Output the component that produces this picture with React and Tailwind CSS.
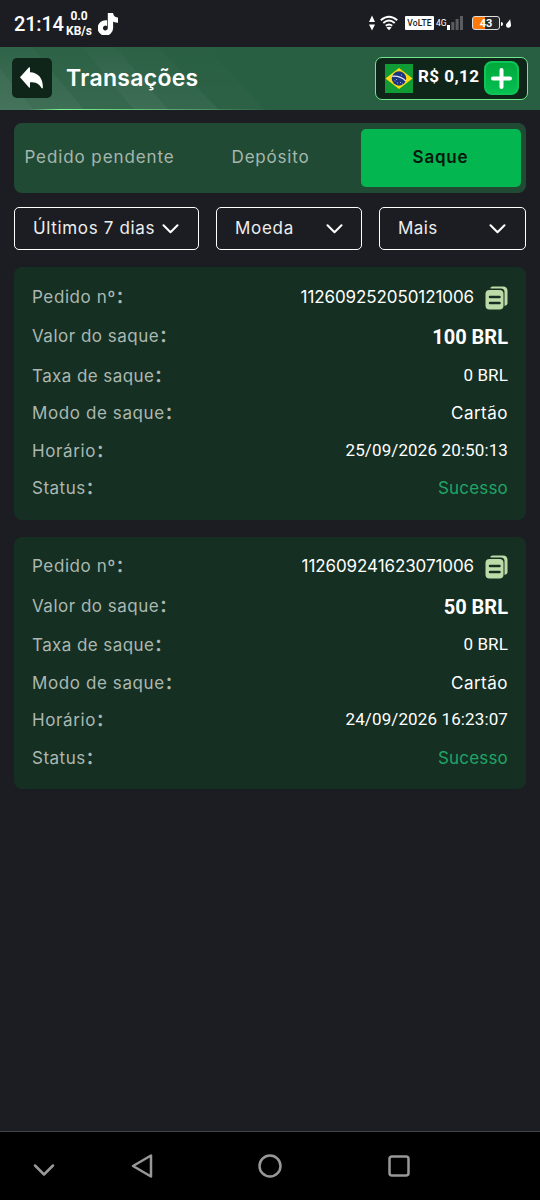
import { FaTiktok } from 'react-icons/fa6';

const orders = [
    { id: '112609252050121006', amount: '100 BRL', fee: '0 BRL', mode: 'Cartão', time: '25/09/2026 20:50:13', status: 'Sucesso' },
    { id: '112609241623071006', amount: '50 BRL', fee: '0 BRL', mode: 'Cartão', time: '24/09/2026 16:23:07', status: 'Sucesso' },
];

const filters = [
    { label: 'Últimos 7 dias', box: 'w-[185px] pr-[19px]', text: 'tracking-[0.65px]' },
    { label: 'Moeda', box: 'w-[146px] pr-[18px]', text: 'tracking-[0.7px]' },
    { label: 'Mais', box: 'w-[147px] pr-[19px]', text: 'tracking-[0.4px]' },
];

const StatusBar = () => (
    <div className="h-[47px] flex items-center justify-between pl-[14px] pr-[29px] font-['Roboto',sans-serif] text-white">
        <div className="flex items-center">
            <span className="text-[20px] leading-6 w-[52px] whitespace-nowrap font-medium tracking-[-0.2px]">21:14</span>
            <div className="flex flex-col items-center w-[26px] text-[12px] leading-[15px] font-bold whitespace-nowrap">
                <span>0.0</span>
                <span>KB/s</span>
            </div>
            <FaTiktok className="ml-[6px] w-[20px] h-[22px] stroke-white stroke-[36px]" />
        </div>
        <div className="flex items-center">
            <svg className="w-[8px] h-[16px] -mt-[2px]" viewBox="0 0 8 16" fill="white">
                <path d="M4 0.5 7 7H1zM4 15.5 1 9.5h6z" />
            </svg>
            <svg className="ml-[4px] w-[18px] h-[16px] -mt-[2px]" viewBox="0 0 18 16" fill="none" stroke="white" strokeWidth="1.9">
                <path d="M0.8 5.2Q9-1.8 17.2 5.2M3.3 8Q9 3.2 14.7 8M5.8 10.8Q9 8.2 12.2 10.8" />
                <path d="M9 15.2 6.4 12.6Q9 10.8 11.6 12.6z" fill="white" stroke="none" />
            </svg>
            <span className="ml-[7px] w-[29px] h-[14px] rounded-[1px] bg-white text-[#1c1d22] text-[8.5px] leading-[14px] font-medium text-center tracking-[0.2px] -mt-px">VoLTE</span>
            <span className="ml-[2px] w-[11px] text-[8.5px] leading-[14px] -mt-px">4G</span>
            <svg className="w-[16px] h-[14px] -mt-px" viewBox="0 0 16 14">
                <rect x="0" y="9" width="3" height="5" fill="#fff" />
                <rect x="4.3" y="6" width="3" height="8" fill="#5b5c60" />
                <rect x="8.6" y="3" width="3" height="11" fill="#5b5c60" />
                <rect x="13" y="0" width="3" height="14" fill="#5b5c60" />
            </svg>
            <div className="ml-[9px] w-[28px] h-[14px] -mt-px rounded-[3px] border border-[#dedede] bg-[linear-gradient(90deg,#ff7a05_0_12px,#26272b_12px)] text-[11px] leading-[13px] font-bold text-center">43</div>
            <span className="ml-px w-[2px] h-[4px] bg-white rounded-r-sm"></span>
            <svg className="ml-[3px] w-[5px] h-[9px]" viewBox="0 0 5 9" fill="white">
                <path d="M4.2 0C4 2 5 3.5 5 6a2.4 2.4 0 0 1-5 .5C0 4.5 2 4 4.2 0z" />
            </svg>
        </div>
    </div>
);

const Flag = () => (
    <svg className="w-[28px] h-[29px]" viewBox="0 0 28 29">
        <rect width="28" height="29" fill="#119b35" />
        <path d="M14 4 27.5 14.5 14 25 .5 14.5z" fill="#fddb13" />
        <circle cx="14" cy="14.5" r="7.2" fill="#1c3581" />
        <path d="M7.2 12.3Q15 11.5 20.8 17" fill="none" stroke="#dfe6ee" strokeWidth="1.3" />
        <path d="M9.5 17h1M12 19h1M15 18.5h1M17 20h1M11 15.5h1M16 11h1" stroke="#9aaace" strokeWidth="1" />
    </svg>
);

const Header = () => (
    <header className="relative h-[63px] flex items-center justify-between pl-3 pr-3 bg-[#285e42]">
        <svg className="absolute inset-0 w-[270px] h-[63px]" viewBox="0 0 270 63">
            <defs>
                <linearGradient id="band" x1="0" y1="0" x2="0" y2="1">
                    <stop offset="0" stopColor="#fff" stopOpacity="0.04" />
                    <stop offset="1" stopColor="#fff" stopOpacity="0.12" />
                </linearGradient>
                <linearGradient id="edge">
                    <stop offset="0.1" stopColor="#7af58f" stopOpacity="0" />
                    <stop offset="0.22" stopColor="#7af58f" />
                    <stop offset="1" stopColor="#7af58f" stopOpacity="0" />
                </linearGradient>
            </defs>
            <path d="M0 0H32L84 63H0z" fill="url(#band)" opacity="0.9" />
            <path d="M0 22 34 63H0z" fill="#fff" fillOpacity="0.03" />
            <path d="M32 0H82L134 63H84z" fill="url(#band)" opacity="0.55" />
            <path d="M82 0H116L168 63H134z" fill="url(#band)" opacity="0.85" />
            <path d="M116 0H158L219 63H168z" fill="url(#band)" opacity="0.5" />
            <path d="M158 0H205L265 63H219z" fill="url(#band)" opacity="0.18" />
            <rect y="62" width="270" height="1" fill="url(#edge)" />
        </svg>
        <div className="relative flex items-center -mt-px">
            <button className="w-10 h-10 rounded-[5px] bg-[#10251a] flex items-center justify-center">
                <svg className="w-[23px] h-[22px] -ml-px" viewBox="0 0 23 22" fill="white">
                    <path d="M0 10.3 9 .3Q10 0 10 1V5.3C18 5.5 22.9 11 22.9 20.5Q22.5 22 21.5 21C19 16.5 16 15.3 10 15.3V19.8Q10 21.3 9 20.4z" />
                </svg>
            </button>
            <h1 className="ml-[14px] text-[23px] leading-7 font-semibold text-white tracking-[0.3px]">Transações</h1>
        </div>
        <div className="relative w-[153px] h-[43px] rounded-[7px] border border-[#72e68c] bg-[#10251a] flex items-center pl-[9px] font-['Roboto',sans-serif]">
            <Flag />
            <span className="ml-[5px] w-[66px] -mt-1 text-[17px] font-bold text-white whitespace-nowrap tracking-[0.45px]">R$ 0,12</span>
            <button className="w-[35px] h-[34px] rounded-[8px] border-2 border-[#0fc557] bg-linear-to-b from-[#00a83a] to-[#05c052] flex items-center justify-center -mt-px">
                <svg className="w-[21px] h-[21px] shrink-0" viewBox="0 0 21 21" stroke="white" strokeWidth="4" strokeLinecap="round">
                    <path d="M10.5 2v17M2 10.5h17" />
                </svg>
            </button>
        </div>
    </header>
);

const Tabs = () => (
    <div className="mt-[13px] mx-[14px] h-[70px] rounded-[8px] bg-[#214a35] flex items-center pr-[5.5px] text-[17px] text-[#a6b7ae]">
        <span className="w-[171px] text-center tracking-[0.9px]">Pedido pendente</span>
        <span className="w-[171px] text-center tracking-[0.8px]">Depósito</span>
        <span className="ml-auto w-[160px] h-[58px] rounded-[5px] bg-[#04b650] text-[#06180d] font-semibold leading-[56px] text-center tracking-[0.8px]">Saque</span>
    </div>
);

const Filters = () => (
    <div className="mt-[14px] mx-[14px] flex justify-between">
        {filters.map(f => (
            <button key={f.label} className={`${f.box} h-[43px] rounded-[5px] border border-white pl-[18px] flex items-center justify-between text-[17px] text-[#eeeeee]`}>
                <span className={f.text}>{f.label}</span>
                <svg className="w-[17px] h-[10px]" viewBox="0 0 17 10" fill="none" stroke="white" strokeWidth="2" strokeLinecap="round" strokeLinejoin="round">
                    <path d="M1.5 1.2 8.5 8.2 15.5 1.2" />
                </svg>
            </button>
        ))}
    </div>
);

const CopyIcon = () => (
    <svg className="w-[23px] h-[24px]" viewBox="0 0 23 24">
        <path d="M5.5 1.5Q6.3.5 8 .5H18Q22.5.5 22.5 5V17.5Q22.5 19 19.5 20V6Q19.5 2.5 16 2.5H5.5z" fill="#bcdba8" />
        <rect x="0.5" y="4" width="18" height="19.5" rx="4" fill="#bcdba8" />
        <path d="M5 11h9.5M5 17h9.5" stroke="#152f22" strokeWidth="2.5" strokeLinecap="round" />
    </svg>
);

const Row = ({ label, track, height = 'h-[37.5px]', children }) => (
    <div className={`${height} flex items-center justify-between`}>
        <span className={`${track} text-[17px] text-[#abb8b1] whitespace-nowrap`}>
            {label}
            <span className="font-bold tracking-normal">：</span>
        </span>
        {children}
    </div>
);

const OrderCard = ({ order }) => (
    <div className="mx-[14px] h-[252.5px] rounded-[8px] bg-[#152f22] px-[18px] pt-[11.5px] text-[17px] text-white">
        <Row label="Pedido nº" track="tracking-[0.6px]" height="h-[38px]">
            <div className="flex items-center gap-[11px]">
                <span className="tracking-[-0.09px]">{order.id}</span>
                <CopyIcon />
            </div>
        </Row>
        <Row label="Valor do saque" track="tracking-[0.5px]" height="h-[41px]">
            <span className="font-['Roboto',sans-serif] text-[20px] font-bold">{order.amount}</span>
        </Row>
        <Row label="Taxa de saque" track="tracking-[0.42px]">
            <span className="pb-[2px] font-['Roboto',sans-serif] tracking-[0.12px]">{order.fee}</span>
        </Row>
        <Row label="Modo de saque" track="tracking-[0.6px]">
            <span className="tracking-[0.5px]">{order.mode}</span>
        </Row>
        <Row label="Horário" track="tracking-[0.6px]">
            <span className="pb-[2px] font-['Roboto',sans-serif] tracking-[0.12px]">{order.time}</span>
        </Row>
        <Row label="Status" track="tracking-[0.5px]">
            <span className="text-[#1fa567] tracking-[0.2px]">{order.status}</span>
        </Row>
    </div>
);

const NavBar = () => (
    <nav className="h-[69px] border-t border-[#434347] bg-black">
        <svg className="w-[540px] h-[68px]" viewBox="0 0 540 68" fill="none" stroke="#989898" strokeWidth="2.5" strokeLinecap="round" strokeLinejoin="round">
            <path d="M35 33.5 44 42.5 53 33.5" />
            <path d="M151 23.5V44.5L133 34z" />
            <circle cx="270" cy="34" r="10.5" />
            <rect x="389.5" y="24.5" width="19" height="19" rx="2.5" />
        </svg>
    </nav>
);

const App = () => (
    <div className="w-[540px] h-[1200px] flex flex-col bg-[#1c1d22] overflow-hidden font-['Inter','Noto_Sans_CJK_SC',sans-serif]">
        <StatusBar />
        <Header />
        <Tabs />
        <Filters />
        <main className="flex-1 mt-[17px] flex flex-col gap-[17px]">
            {orders.map(order => (
                <OrderCard key={order.id} order={order} />
            ))}
        </main>
        <NavBar />
    </div>
);

export default App;
